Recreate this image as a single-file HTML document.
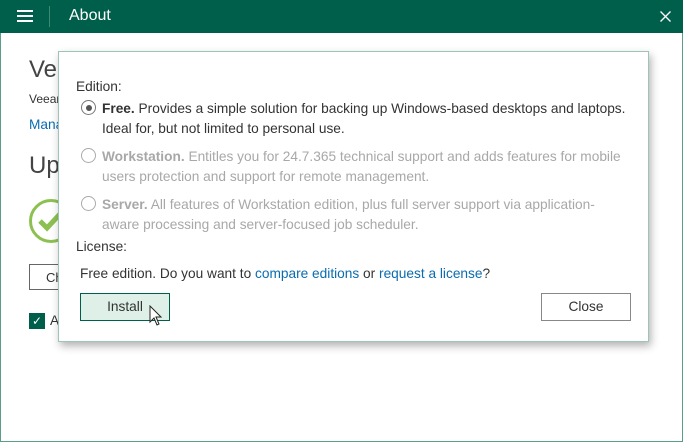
<!DOCTYPE html>
<html><head><style>
body{margin:0;width:683px;height:442px;overflow:hidden;background:#fff;font-family:"Liberation Sans",sans-serif;position:relative}
.win{position:absolute;left:0;top:0;width:681px;height:440px;border:1px solid #5a9e8a}
.tb{position:absolute;left:0;top:0;width:683px;height:33px;background:#005f4b;color:#fff}
.a{position:absolute;white-space:nowrap}
.dlg{position:absolute;left:58px;top:51px;width:589px;height:289px;background:#fff;border:1px solid #9cc4b8;box-shadow:2px 4px 8px rgba(0,0,0,.3)}
.t{font-size:13.7px;color:#333}
.g{color:#a8a8a8}
.rad{position:absolute;width:15px;height:15px;border:1px solid #aaa;border-radius:50%;box-sizing:border-box}
a{color:#0a6cb0;text-decoration:none}
.btn{position:absolute;box-sizing:border-box;font-size:13.7px;text-align:center;color:#333}
</style></head><body>
<div class="win"></div>
<div class="tb">
 <div class="a" style="left:17px;top:10px;width:16px;height:2px;background:#fff;box-shadow:0 5px 0 #fff,0 10px 0 #fff"></div>
 <div class="a" style="left:49px;top:6px;width:1px;height:21px;background:#3f8a76"></div>
 <div class="a" style="left:69px;top:7px;font-size:16px">About</div>
 <svg class="a" style="left:660px;top:11px" width="11" height="11"><path d="M0.5 0.5L10.5 10.5M10.5 0.5L0.5 10.5" stroke="#fff" stroke-width="1.3"/></svg>
</div>
<div class="a" style="left:29px;top:56px;font-size:24px;color:#444">Version</div>
<div class="a t" style="left:29px;top:92px;font-size:12px">Veeam</div>
<div class="a" style="left:29px;top:117px;font-size:13.7px;color:#0a6cb0">Manage</div>
<div class="a" style="left:29px;top:152px;font-size:24px;color:#444">Update</div>
<div class="a" style="left:29px;top:199px;width:44px;height:44px;border:3px solid #8cc152;border-radius:50%;box-sizing:border-box"></div>
<svg class="a" style="left:38px;top:210px" width="24" height="22"><path d="M2 11 L9 18 L22 4" stroke="#8cc152" stroke-width="5" fill="none"/></svg>
<div class="a" style="left:29px;top:264px;width:60px;height:26px;border:1px solid #666;box-sizing:border-box;font-size:13px;color:#333;padding:5px 0 0 16px">Check</div>
<div class="a" style="left:29px;top:313px;width:16px;height:16px;background:#005f4b;color:#fff;font-size:12px;text-align:center;line-height:16px">✓</div>
<div class="a t" style="left:50px;top:313px">Auto</div>
<div class="dlg">
 <div class="a t" style="left:17px;top:27px">Edition:</div>
 <div class="rad" style="left:22px;top:48px;border-color:#777"><div style="position:absolute;left:3.5px;top:3.5px;width:6px;height:6px;border-radius:50%;background:#555"></div></div>
 <div class="a t" style="left:43px;top:47px;line-height:20px"><b>Free.</b> Provides a simple solution for backing up Windows-based desktops and laptops.<br>Ideal for, but not limited to personal use.</div>
 <div class="rad" style="left:22px;top:96px"></div>
 <div class="a t g" style="left:43px;top:95px;line-height:20px"><b>Workstation.</b> Entitles you for 24.7.365 technical support and adds features for mobile<br>users protection and support for remote management.</div>
 <div class="rad" style="left:22px;top:144px"></div>
 <div class="a t g" style="left:43px;top:143px;line-height:20px"><b>Server.</b> All features of Workstation edition, plus full server support via application-<br>aware processing and server-focused job scheduler.</div>
 <div class="a t" style="left:17px;top:187px">License:</div>
 <div class="a t" style="left:21px;top:214px">Free edition. Do you want to <a>compare editions</a> or <a>request a license</a>?</div>
 <div class="btn" style="left:21px;top:241px;width:90px;height:28px;background:#dff0e8;border:1px solid #005f4b;line-height:26px">Install</div>
 <div class="btn" style="left:482px;top:241px;width:90px;height:28px;border:1px solid #888;line-height:26px">Close</div>
</div>
<svg class="a" style="left:149px;top:305px" width="14" height="22" viewBox="0 0 14 22"><path d="M1 1 L1 17 L5 13 L8 20 L10 19 L7 12 L12 12 Z" fill="#fff" stroke="#222" stroke-width="1"/></svg>
</body></html>
